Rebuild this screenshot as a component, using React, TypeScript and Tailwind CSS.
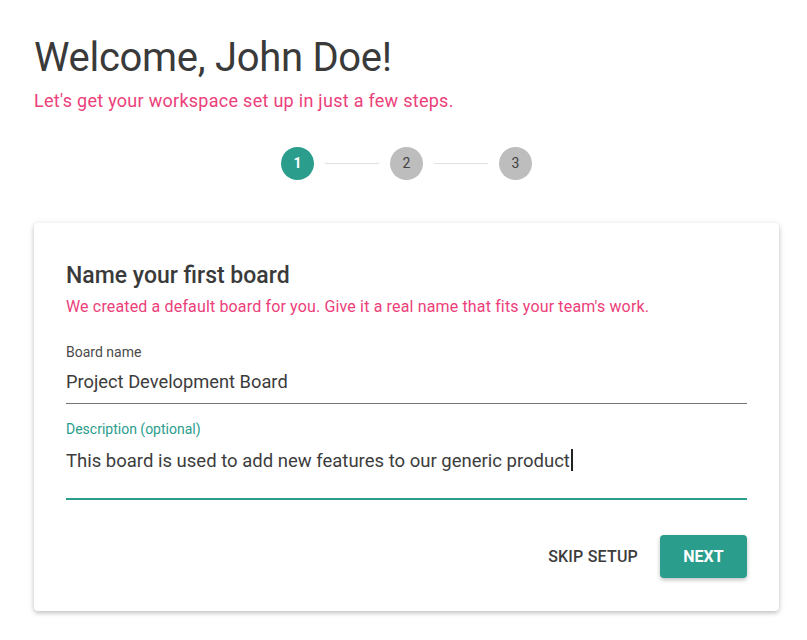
import React from 'react';

const Step = ({ n, active }: { n: number; active?: boolean }) => (
    <div
        className={
            'flex h-[33px] w-[33px] items-center justify-center rounded-full text-[14px] ' +
            (active ? 'bg-[#2a9d8c] font-bold text-white' : 'bg-[#bdbdbd] text-[#424242]')
        }
    >
        {n}
    </div>
);

const App = () => {
    return (
        <div className="min-h-[640px] bg-white px-[34px] pt-[32px] font-['Roboto',sans-serif] text-[#3c3c3c]">
            <h1 className="text-[40px] leading-[52px] font-normal tracking-[-0.3px] text-[#3a3a3a]">Welcome, John Doe!</h1>
            <p className="mt-[5px] text-[18px] leading-[24px] tracking-[0.28px] text-[#ec407a]">
                Let's get your workspace set up in just a few steps.
            </p>

            <div className="mt-[34px] flex items-center justify-center gap-[11px] pl-[6px]">
                <Step n={1} active />
                <div className="h-px w-[54px] bg-[#e0e0e0]" />
                <Step n={2} />
                <div className="h-px w-[54px] bg-[#e0e0e0]" />
                <Step n={3} />
            </div>

            <div className="mt-[43px] w-[745px] rounded-[4px] bg-white px-8 pt-[39px] pb-[33px] shadow-[0_2px_4px_rgba(0,0,0,0.2),0_1px_8px_rgba(0,0,0,0.08)]">
                <h2 className="text-[23px] leading-[28px] font-medium text-[#3a3a3a]">Name your first board</h2>
                <p className="mt-[6px] text-[16px] leading-[22px] tracking-[0.15px] text-[#ec407a]">
                    We created a default board for you. Give it a real name that fits your team's work.
                </p>

                <div className="mt-[25px]">
                    <div className="text-[14px] leading-[18px] text-[#4a4a4a]">Board name</div>
                    <div className="border-b border-[#757575] pt-[8px] pb-[8px] text-[18.3px] leading-[26px] text-[#3c3c3c]">
                        Project Development Board
                    </div>
                </div>

                <div className="mt-[16px]">
                    <div className="text-[14px] leading-[18px] text-[#2a9d8c]">Description (optional)</div>
                    <div className="h-[62px] border-b-2 border-[#2a9d8c] pt-[7px] text-[18.5px] leading-[26px] text-[#3c3c3c]">
                        This board is used to add new features to our generic product
                        <span className="ml-px inline-block h-[22px] w-[2px] translate-y-[4px] bg-[#222]" />
                    </div>
                </div>

                <div className="mt-[35px] flex items-center justify-end gap-[22px]">
                    <button className="text-[16px] font-medium tracking-[0.2px] text-[#3c3c3c]">SKIP SETUP</button>
                    <button className="h-[43px] w-[87px] rounded-[4px] bg-[#2a9d8c] text-[16px] font-bold text-white shadow-[0_2px_4px_rgba(0,0,0,0.25)]">
                        NEXT
                    </button>
                </div>
            </div>
        </div>
    );
};

export default App;
